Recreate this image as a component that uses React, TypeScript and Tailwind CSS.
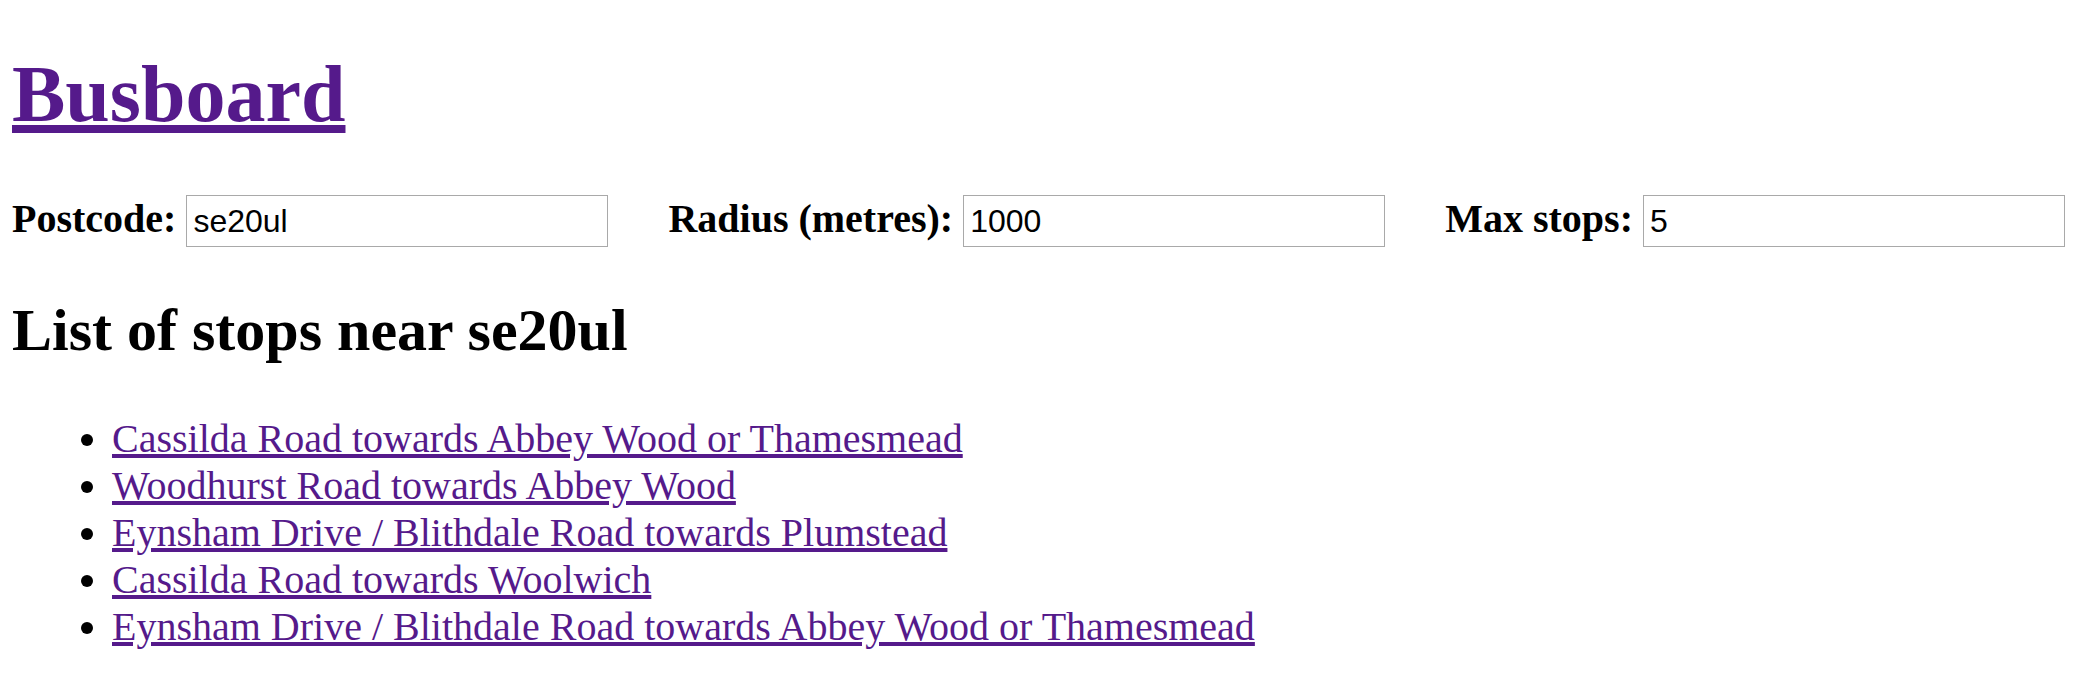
import React from "react";

const stops = [
  "Cassilda Road towards Abbey Wood or Thamesmead",
  "Woodhurst Road towards Abbey Wood",
  "Eynsham Drive / Blithdale Road towards Plumstead",
  "Cassilda Road towards Woolwich",
  "Eynsham Drive / Blithdale Road towards Abbey Wood or Thamesmead",
];

function Field({ label, value }: { label: string; value: string }) {
  return (
    <label className="flex shrink-0 items-baseline gap-[10px]">
      <span className="shrink-0 whitespace-nowrap text-[40px] font-bold leading-[46px] text-black">{label}</span>
      <input
        readOnly
        value={value}
        className="h-[52px] w-[422px] shrink-0 border border-[#a9a9a9] bg-white px-[6px] font-['Liberation_Sans',Arial,sans-serif] text-[32px] text-black outline-none"
      />
    </label>
  );
}

export default function App() {
  return (
    <div className="min-h-[675px] bg-white px-[12px] pb-[10px] font-['Liberation_Serif','Times_New_Roman',serif] text-black">
      <h1 className="pt-[48px] text-[80px] font-bold leading-[92px]">
        <a href="#" className="text-[#551a8b] underline">
          Busboard
        </a>
      </h1>
      <form className="mt-[55px] flex items-baseline gap-[60px] whitespace-nowrap">
        <Field label="Postcode:" value="se20ul" />
        <Field label="Radius (metres):" value="1000" />
        <Field label="Max stops:" value="5" />
      </form>
      <h2 className="mt-[49px] text-[60px] font-bold leading-[69px]">List of stops near se20ul</h2>
      <ul className="mt-[50px] list-disc pl-[100px] text-[40px] leading-[47px]">
        {stops.map((s) => (
          <li key={s}>
            <a href="#" className="text-[#551a8b] underline">
              {s}
            </a>
          </li>
        ))}
      </ul>
    </div>
  );
}
